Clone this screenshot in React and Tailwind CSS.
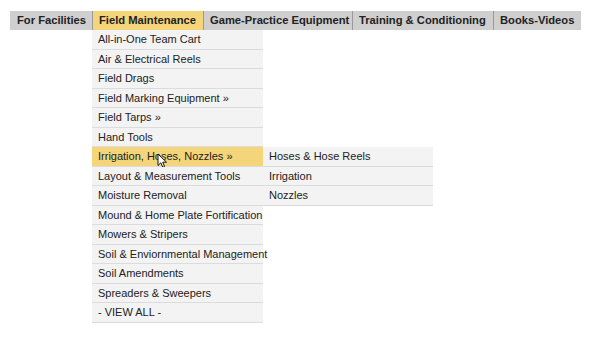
const navItems = [
  "For Facilities",
  "Field Maintenance",
  "Game-Practice Equipment",
  "Training & Conditioning",
  "Books-Videos",
]

const menuItems = [
  "All-in-One Team Cart",
  "Air & Electrical Reels",
  "Field Drags",
  "Field Marking Equipment »",
  "Field Tarps »",
  "Hand Tools",
  "Irrigation, Hoses, Nozzles »",
  "Layout & Measurement Tools",
  "Moisture Removal",
  "Mound & Home Plate Fortification",
  "Mowers & Stripers",
  "Soil & Enviornmental Management",
  "Soil Amendments",
  "Spreaders & Sweepers",
  "- VIEW ALL -",
]

const subItems = ["Hoses & Hose Reels", "Irrigation", "Nozzles"]

const Row = ({ label, active, children }) => (
  <div className="relative">
    <div
      className={`h-[19.5px] flex items-center pl-[6px] whitespace-nowrap border-b border-[#dcdcdc] shadow-[0_1px_0_#fff] ${
        active ? "bg-[#f4d57a]" : "bg-[#f3f3f3]"
      }`}
    >
      {label}
    </div>
    {children}
  </div>
)

const App = () => {
  return (
    <div
      className="w-[600px] h-[340px] bg-white pt-[11px] pl-[10px] text-[#222] text-[11px]"
      style={{ fontFamily: '"Liberation Sans", Arial, sans-serif' }}
    >
      <div className="flex w-[571px] h-[19px] bg-[#cfcfcf] font-bold text-[11.2px] text-[#222]">
        {navItems.map((item, i) => (
          <div
            key={item}
            className={`relative shrink-0 flex items-center px-[6px] whitespace-nowrap ${
              i > 0 ? "border-l border-[#9a9a9a]" : "pl-[7px]"
            } ${i === 1 ? "bg-[#f4d57a] w-[111px]" : ""} ${i === 2 ? "w-[149px]" : ""} ${
              i === 3 ? "w-[141px]" : ""
            } ${i === 0 ? "w-[82px]" : ""} ${i === 4 ? "flex-1" : ""}`}
          >
            {item}
            {i === 1 && (
              <div className="absolute top-[19px] left-[-1px] w-[171px] font-normal text-[11px] z-10">
                {menuItems.map((m) => (
                  <Row key={m} label={m} active={m.startsWith("Irrigation")}>
                    {m.startsWith("Irrigation") && (
                      <>
                        <svg
                          className="absolute left-[65px] top-[6px]"
                          width="11"
                          height="16"
                          viewBox="0 0 11 16"
                        >
                          <path
                            d="M1 1 L1 12.5 L3.8 9.8 L5.8 14.3 L7.6 13.5 L5.7 9.2 L9.5 9.2 Z"
                            fill="#fff"
                            stroke="#111"
                            strokeWidth="1"
                            strokeLinejoin="round"
                          />
                        </svg>
                        <div className="absolute top-0 left-[171px] w-[170px]">
                          {subItems.map((s) => (
                            <Row key={s} label={s} />
                          ))}
                        </div>
                      </>
                    )}
                  </Row>
                ))}
              </div>
            )}
          </div>
        ))}
      </div>
    </div>
  )
}

export default App
